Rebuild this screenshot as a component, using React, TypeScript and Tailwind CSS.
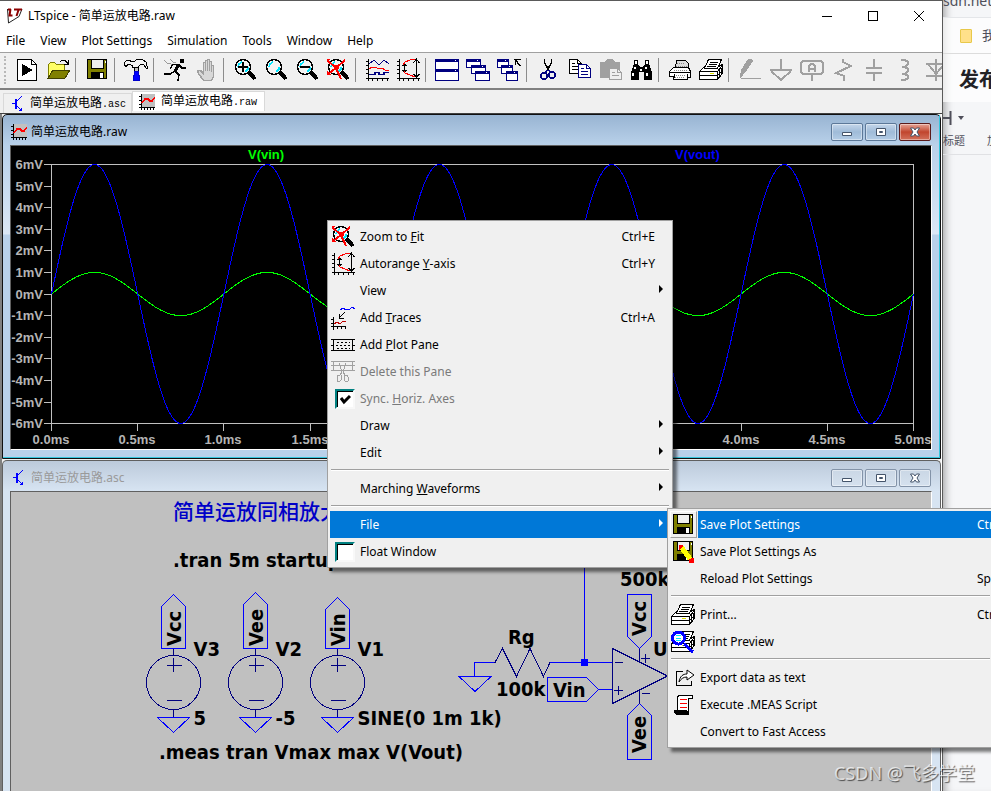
import React from "react";

type Glyph = () => React.ReactElement;

const Box = ({ children }: { children: React.ReactNode }) => (
  <svg viewBox="0 0 24 24" className="h-6 w-6 shrink-0" fill="none" stroke="#000" shapeRendering="crispEdges" aria-hidden="true">
    {children}
  </svg>
);

/* ---------- toolbar and menu glyphs ---------- */

const PlayIcon: Glyph = () => (
  <Box>
    <path d="M2.5 1.5h14l5 5v16h-19z" fill="#fff" />
    <path d="M16.5 1.5v5h5" />
    <path d="M7 6l11 6l-11 6z" fill="#000" stroke="none" />
  </Box>
);

const OpenIcon: Glyph = () => (
  <Box>
    <path d="M2.5 19.5v-13l2-2h4l2 2h8v5" fill="#ffff66" stroke="#808000" />
    <path d="M2 20l5-8h17l-5 8z" fill="#808000" stroke="#404000" />
    <path d="M14 4l2-2h3l3 4M22.5 2v4.500h-5" />
  </Box>
);

const SaveShape = () => (
  <>
    <path d="M2.500 1.500h19v19h-19z" fill="#808000" />
    <path d="M6.500 1.500h12v9h-12z" fill="#efefef" />
    <path d="M6 14h13v7h-13z" fill="#000" stroke="none" />
    <path d="M15 15h3v5h-3zM19.500 3h1v2h-1z" fill="#fff" stroke="none" />
  </>
);
const SaveIcon: Glyph = () => (
  <Box>
    <SaveShape />
  </Box>
);
const SaveAsIcon: Glyph = () => (
  <Box>
    <SaveShape />
    <path d="M10 7l9 12" stroke="#ff0" strokeWidth="5" />
    <path d="M8 5h4l-3 4h-1z" fill="#f00" stroke="#f00" />
    <path d="M18 20l4-2l1 4l-4 1z" fill="#f00" stroke="#f00" />
  </Box>
);

const HammerIcon: Glyph = () => (
  <Box>
    <path d="M.5 7.500v-3l2-2h3l2 1h3l2-2h6l4 3l1 6h-1l-3-4h-3l-2 2v1h-6v-2l-3-1h-2l-1 2z" fill="#f4f4f4" />
    <path d="M10.500 9.500h4v4h-4z" fill="#c0c0c0" />
    <path d="M10.500 13.500h4v3l1 2v4h-6v-4l1-2z" fill="#00f" stroke="#00c" />
  </Box>
);

const RunIcon: Glyph = () => (
  <Box>
    <path d="M17 1h4v4h-4z" fill="#000" stroke="none" />
    <path d="M16 6l-4 7" strokeWidth="3" />
    <path d="M15 6.500h-5l-3 4M16 7l3 3h4M12 13l-5 3h-6M12 13l4 4l-1 6" strokeWidth="1.500" />
    <path d="M1 2l3 3h3l2 2M7 1l3 3h3" stroke="#999" />
  </Box>
);

const HandIcon: Glyph = () => (
  <Box>
    <path
      d="M9.500 22.500l-5-7l-1-3h3l3 3v-11h2v8v-10h2v10v-11h2v11v-9h2v10v-6h2v11l-2 4z"
      stroke="#a0a0a0"
      strokeWidth="1.500"
      fill="#d8d8d8"
    />
  </Box>
);

const LensShape = () => (
  <>
    <path d="M16 14l6 7" strokeWidth="4" />
    <circle cx="10" cy="9" r="7.500" fill="#f4f4f4" strokeWidth="1.500" />
    <path d="M5 9l1-3l3-2M12 14l3-3v-2" stroke="#00e5ff" strokeWidth="1.500" />
  </>
);
const ZoomInIcon: Glyph = () => (
  <Box>
    <LensShape />
    <path d="M5 9h10M10 4v10" strokeWidth="2" />
  </Box>
);
const ZoomBoxIcon: Glyph = () => (
  <Box>
    <LensShape />
  </Box>
);
const ZoomOutIcon: Glyph = () => (
  <Box>
    <LensShape />
    <path d="M5 9h10" strokeWidth="2" />
  </Box>
);
const ZoomFitIcon: Glyph = () => (
  <Box>
    <LensShape />
    <path d="M1 2l9 8l5 11M19 2l-9 8l-8 6" stroke="#f00" strokeWidth="2" />
    <path d="M1 1h3l-3 3zM1 13v3h3z" fill="#f00" stroke="#f00" />
    <path d="M8 7h5v4h-3z" fill="#f00" stroke="none" />
  </Box>
);

const AxesShape = () => <path d="M3.500 1v22M1 20.500h23M1 3.500h2M1 7.500h2M1 11.500h2M1 15.500h2M7.500 21v2M12.500 21v2M17.500 21v2M22.500 21v2" />;

const TracesIcon: Glyph = () => (
  <Box>
    <AxesShape />
    <path d="M4 6l5-4l5 5l5-5l5 4" stroke="#000080" />
    <path d="M4 11l3-2h3l4 2l3-1l3 2h4" stroke="#f00" />
    <path d="M4 16.500h6v-2h4v2h5v-2h5" stroke="#000080" strokeWidth="1.500" />
  </Box>
);
const AutorangeIcon: Glyph = () => (
  <Box>
    <AxesShape />
    <path d="M8.500 6v8M6.500 8l2-2l2 2M6.500 12l2 2l2-2M20.500 2v17M17.500 5l3-4l3 4M17.500 16l3 3l3-3" />
    <path d="M9 4l5-2l5-1M9 15l5 2l5 2M9 4l-2 3M9 15l-1-2" stroke="#f00" />
  </Box>
);

const Pane = ({ x, y, w, h }: { x: number; y: number; w: number; h: number }) => (
  <>
    <path d={`M${x + 0.5} ${y + 0.5}h${w}v${h}h-${w}z`} fill="#fff" stroke="#000080" />
    <path d={`M${x} ${y + 1.5}h${w}`} stroke="#000080" strokeWidth="3" />
    <path d={`M${x + w - 3} ${y + 1.5}h1`} stroke="#fff" />
  </>
);
const TileIcon: Glyph = () => (
  <Box>
    <Pane x={0} y={1} w={23} h={10} />
    <Pane x={0} y={11} w={23} h={11} />
  </Box>
);
const CascadeIcon: Glyph = () => (
  <Box>
    <Pane x={0} y={1} w={14} h={8} />
    <Pane x={5} y={7} w={14} h={8} />
    <Pane x={9} y={13} w={14} h={9} />
  </Box>
);
const CloseAllIcon: Glyph = () => (
  <Box>
    <Pane x={0} y={1} w={11} h={8} />
    <Pane x={4} y={7} w={11} h={8} />
    <Pane x={9} y={13} w={11} h={9} />
    <path d="M18.500 1.500h5M18.500 1.500v5M18 1l5 7" strokeWidth="1.500" />
  </Box>
);

const CutIcon: Glyph = () => (
  <Box>
    <path d="M8.500 1v4l5 8M15.500 1v4l-5 8" strokeWidth="1.500" />
    <circle cx="8" cy="18" r="3" stroke="#000080" strokeWidth="1.500" />
    <circle cx="16" cy="17" r="3" stroke="#000080" strokeWidth="1.500" />
    <path d="M11 12l-2 4M13 12l2 3" stroke="#000080" strokeWidth="1.500" />
  </Box>
);
const CopyIcon: Glyph = () => (
  <Box>
    <path d="M2.500 1.500h8l4 4v10h-12z" fill="#fff" />
    <path d="M10.500 1.500v4h4M5 5.500h3M5 8.500h6M5 11.500h6" />
    <path d="M11.500 6.500h8l4 4v9h-12z" fill="#fff" stroke="#000080" />
    <path d="M19.500 6.500v4h4M14 10.500h3M14 13.500h7M14 16.500h7" stroke="#000080" />
  </Box>
);
const PasteIcon: Glyph = () => (
  <Box>
    <path d="M2 4h5l2-3h6l2 3h5v16h-20z" fill="#a0a0a0" stroke="none" />
    <path d="M11.500 10.500h8l4 4v7h-12z" fill="#efefef" stroke="#a0a0a0" />
    <path d="M14 14.500h3M14 17.500h7M19.500 10.500v4h4" stroke="#a0a0a0" />
  </Box>
);
const FindIcon: Glyph = () => (
  <Box>
    <path d="M5 2h4v4l2 3h3l2-3v-4h4v4l3 8v8h-8v-8h-5v8h-8v-8l3-8z" fill="#000" stroke="none" />
    <path d="M6 3h2v3h-2zM17 3h2v3h-2zM5 9h2v2h-2zM16 9h2v2h-2zM3 15h2v3h-2zM17 15h2v3h-2zM11 11h2v2h-2z" fill="#fff" stroke="none" />
  </Box>
);
const OldPrinterIcon: Glyph = () => (
  <Box>
    <path d="M7.500 9.500l1-7h9l3 3v5" fill="#ddd" />
    <path d="M1.500 13.500l4-4h15l2 4v6h-3v2h-14l1-3h-5z" fill="#fff" />
    <path d="M2 14h20M7 16.500l-2 5M19.500 16v4" />
    <path d="M6 12h14M8 17h10M9 5h8M8 8h11M7 19.500h10" strokeDasharray="1 1" stroke="#888" />
  </Box>
);
const PrinterShape = () => (
  <>
    <path d="M.5 13.500l5-5h14l4-2v9l-5 6h-18z" fill="#fff" />
    <path d="M5.500 10.500l4-9h13l-4 9z" fill="#fff" />
    <path d="M11 4.500h8M10 6.500h8M8 8.500h9M.5 13.500h18l5-6M18.500 13.500v8M.5 17.500h18l5-5M20.500 12v8M22 10v7" />
    <path d="M11 15.500h4" stroke="#e0e000" strokeWidth="1.500" />
  </>
);
const PrinterIcon: Glyph = () => (
  <Box>
    <PrinterShape />
  </Box>
);
const PreviewIcon: Glyph = () => (
  <Box>
    <PrinterShape />
    <circle cx="7.500" cy="8" r="6" fill="#fff" stroke="#00f" strokeWidth="3" />
    <path d="M13 14l9 8" stroke="#00f" strokeWidth="3" />
    <path d="M5 5.500h5M5 8h5M5 10.500h5" stroke="#00e5ff" />
  </Box>
);
const PencilIcon: Glyph = () => (
  <Box>
    <path d="M10 1h4l1 2l-8 12l-5 4l1-7z" fill="#a0a0a0" stroke="none" />
    <path d="M3 20.500h20M2 20l3-3" stroke="#a0a0a0" />
  </Box>
);
const GroundIcon: Glyph = () => (
  <Box>
    <path d="M12 1v11M1 12h22M2 13l10 9l10-9" stroke="#a0a0a0" strokeWidth="2" />
  </Box>
);
const LabelIcon: Glyph = () => (
  <Box>
    <path d="M3 3h18l2 2v9l-2 2h-18l-2-2v-9z" stroke="#a0a0a0" strokeWidth="2" />
    <path d="M12 17v6" stroke="#a0a0a0" strokeWidth="2" />
    <path d="M9 14v-6l2-2h2l2 2v6M9 10.500h6" stroke="#a0a0a0" strokeWidth="2" />
  </Box>
);
const ResistorIcon: Glyph = () => (
  <Box>
    <path d="M12 1v3l8 4l-15 7l8 3v5" stroke="#a0a0a0" strokeWidth="2" />
  </Box>
);
const CapacitorIcon: Glyph = () => (
  <Box>
    <path d="M12 1v9M4 10h16M4 15h16M12 15v8" stroke="#a0a0a0" strokeWidth="2" />
  </Box>
);
const InductorIcon: Glyph = () => (
  <Box>
    <path d="M8 2h4l3 2v2l-3 3h-3M9 9h3l3 2v2l-3 3h-3M9 16h3l3 2v2l-3 2h-4" stroke="#a0a0a0" strokeWidth="2" />
  </Box>
);
const DiodeIcon: Glyph = () => (
  <Box>
    <path d="M12 1v22M2 6h20M4 6l8 10l8-10M2 18h22" stroke="#a0a0a0" strokeWidth="2" />
  </Box>
);
const AddTraceIcon: Glyph = () => (
  <Box>
    <path d="M2.500 11v13M0 20.500h15M0 13.500h2M0 17.500h2M6.500 21v2M10.500 21v2M14.500 21v2M8 12l6-6M8.500 8v4h4" />
    <path d="M3 18l3-2l3 2l3-3l3 1" stroke="#c00000" />
    <path d="M9 4l3-2l3 2l4-1l2-2l3 2" stroke="#00f" />
  </Box>
);
const AddPaneIcon: Glyph = () => (
  <Box>
    <path d="M0 6.500h24M0 17.500h24M2.500 6v12M21.500 6v12M0 12.500h2M22 12.500h2" />
    <path d="M6 9.500h13M5 12.500h15M6 15.500h13" strokeDasharray="2 2" />
  </Box>
);
const DeletePaneIcon: Glyph = () => (
  <Box>
    <path d="M0 1.500h24M0 10.500h24M2.500 1v10M21.500 1v10M0 5.500h24M8 3l3 9M15 3l-3 9" stroke="#a0a0a0" />
    <path d="M11 12l-2 3h-2l-1 2v4l2 1l2-2v-5M12 12l2 3h2l1 2v4l-2 1l-2-2v-5" stroke="#a0a0a0" />
  </Box>
);
const ExportIcon: Glyph = () => (
  <Box>
    <path d="M12 5.500h-6.500v14h15v-5" />
    <path d="M8 16c1-6 4-8 8-8v-4l7 5l-7 5v-3c-4 0-6 2-8 5z" fill="#fff" shapeRendering="auto" />
  </Box>
);
const ScriptIcon: Glyph = () => (
  <Box>
    <path d="M6.500 17v-13l2-2h13v3h-4v13l-2 2" fill="#fff" />
    <path d="M9 6.500h7M9 10.500h7M9 14.500h7" stroke="#f00" />
    <path d="M3 17h12l2 2v2h-12l-2-2z" fill="#000" />
  </Box>
);
const Blank: Glyph = () => <span className="h-6 w-6 shrink-0" />;

const WaveTabIcon = () => (
  <svg viewBox="0 0 16 16" className="h-4 w-4 shrink-0" fill="none" shapeRendering="crispEdges" aria-hidden="true">
    <path d="M2 0h14v13h-14z" fill="#c0c0c0" />
    <path d="M2.500 0v16M0 13.500h16M0 2.500h2M0 6.500h2M0 10.500h2M5.500 14v2M8.500 14v2M11.500 14v2M14.500 14v2" stroke="#000" />
    <path d="M3 9l3-4h3l2 2h2l3-4" stroke="#f00" strokeWidth="1.500" />
  </svg>
);
const TransistorIcon = () => (
  <svg viewBox="0 0 16 16" className="h-4 w-4 shrink-0" fill="none" stroke="#00f" shapeRendering="crispEdges" aria-hidden="true">
    <path d="M2 7.500h3M12 0l-6 6M6 9l6 6M11.500 15v-3M9 14.500h3" />
    <path d="M6 3v10" strokeWidth="2" />
  </svg>
);

const toolGroups: { name: string; icon: Glyph }[][] = [
  [{ name: "New schematic", icon: PlayIcon }, { name: "Open", icon: OpenIcon }],
  [{ name: "Save", icon: SaveIcon }],
  [{ name: "Control panel", icon: HammerIcon }],
  [{ name: "Run", icon: RunIcon }, { name: "Halt", icon: HandIcon }],
  [
    { name: "Zoom in", icon: ZoomInIcon },
    { name: "Zoom area", icon: ZoomBoxIcon },
    { name: "Zoom out", icon: ZoomOutIcon },
    { name: "Zoom to fit", icon: ZoomFitIcon },
  ],
  [{ name: "Pick traces", icon: TracesIcon }, { name: "Autorange", icon: AutorangeIcon }],
  [
    { name: "Tile windows", icon: TileIcon },
    { name: "Cascade windows", icon: CascadeIcon },
    { name: "Close all windows", icon: CloseAllIcon },
  ],
  [
    { name: "Cut", icon: CutIcon },
    { name: "Copy", icon: CopyIcon },
    { name: "Paste", icon: PasteIcon },
    { name: "Find", icon: FindIcon },
  ],
  [{ name: "Print setup", icon: OldPrinterIcon }, { name: "Print", icon: PrinterIcon }],
  [
    { name: "Wire", icon: PencilIcon },
    { name: "Ground", icon: GroundIcon },
    { name: "Label net", icon: LabelIcon },
    { name: "Resistor", icon: ResistorIcon },
    { name: "Capacitor", icon: CapacitorIcon },
    { name: "Inductor", icon: InductorIcon },
    { name: "Diode", icon: DiodeIcon },
  ],
];

function TitleBar() {
  return (
    <div className="flex h-[30px] items-center bg-white">
      <svg viewBox="0 0 16 16" className="ml-[7px] h-4 w-4 shrink-0" fill="none" aria-hidden="true">
        <path d="M.5 1l1 14L12 8.500L15 1" stroke="#222" />
        <path d="M1 1.500h3M3.500 1l-1 6.500h3M7 1.500h8M11.500 2l-2 6" stroke="#8b0000" strokeWidth="2" />
      </svg>
      <h1 className="ml-[5px] flex-1 text-xs">LTspice - 简单运放电路.raw</h1>
      <button aria-label="Minimize" className="flex h-full w-[46px] items-center justify-center">
        <svg viewBox="0 0 10 10" className="h-[10px] w-[10px]" stroke="#000" shapeRendering="crispEdges"><path d="M0 5.500h10" /></svg>
      </button>
      <button aria-label="Maximize" className="flex h-full w-[46px] items-center justify-center">
        <svg viewBox="0 0 10 10" className="h-[10px] w-[10px]" stroke="#000" fill="none" shapeRendering="crispEdges"><path d="M.5.5h9v9h-9z" /></svg>
      </button>
      <button aria-label="Close" className="flex h-full w-[46px] items-center justify-center">
        <svg viewBox="0 0 10 10" className="h-[10px] w-[10px]" stroke="#000"><path d="M0 0l10 10M10 0l-10 10" /></svg>
      </button>
    </div>
  );
}

function MenuBar() {
  return (
    <nav className="flex h-[21px] items-center gap-[15px] bg-white pb-px pl-[6px] text-xs">
      {["File", "View", "Plot Settings", "Simulation", "Tools", "Window", "Help"].map((m) => (
        <button key={m} className="whitespace-nowrap">{m}</button>
      ))}
    </nav>
  );
}

function Toolbar() {
  return (
    <div role="toolbar" className="flex h-[38px] items-center overflow-hidden border-t border-b-2 border-t-[#a0a0a0] border-b-[#808080] bg-[#f0f0f0] pb-[2px]">
      <span className="mr-[5px] ml-1 h-7 w-[2px] shrink-0 border-l-2 border-dotted border-[#b8b8b8]" />
      {toolGroups.map((group, i) => (
        <React.Fragment key={i}>
          {i > 0 && <span className="mr-[5px] ml-[2px] h-6 w-px shrink-0 bg-[#8c8c8c]" />}
          {group.map(({ name, icon: Icon }) => (
            <button key={name} aria-label={name} className="flex w-[31px] shrink-0 justify-center">
              <Icon />
            </button>
          ))}
        </React.Fragment>
      ))}
    </div>
  );
}

function DocTabs() {
  return (
    <div role="tablist" className="flex h-6 border-b border-[#404040] bg-[#f0f0f0] pl-[3px] text-xs">
      <button role="tab" aria-selected="false" className="mt-[3px] flex h-5 w-[129px] items-center gap-1 border border-b-0 border-[#d9d9d9] pl-[6px]">
        <TransistorIcon />
        <span className="whitespace-nowrap">简单运放电路<span className="font-['Liberation_Mono',monospace] text-[10px]">.asc</span></span>
      </button>
      <button role="tab" aria-selected="true" className="mt-px flex h-5 w-[133px] items-center gap-[6px] border border-b-0 border-[#d9d9d9] bg-white pl-[6px]">
        <WaveTabIcon />
        <span className="whitespace-nowrap">简单运放电路<span className="font-['Liberation_Mono',monospace] text-[10px]">.raw</span></span>
      </button>
    </div>
  );
}

function ChildButtons({ active }: { active: boolean }) {
  const plain = active
    ? "border-[#5c7898] bg-linear-to-b from-[#c4d6ea] via-[#9fbbd8] to-[#b4cde6]"
    : "border-[#8393a8] bg-linear-to-b from-[#cad7e5] to-[#d5e1ee]";
  const close = active
    ? "border-[#5a1a1a] bg-linear-to-b from-[#e5a396] via-[#c1452d] to-[#d2705a]"
    : plain;
  const base = "flex h-[18px] w-8 items-center justify-center rounded-[2px] border ring-1 ring-inset ring-white/40";
  return (
    <div className="flex gap-[2px]">
      <button aria-label="Minimize" className={`${base} ${plain}`}>
        <svg viewBox="0 0 12 10" className="h-[10px] w-3" fill="#fff" stroke="#44546a"><path d="M1.500 5.500h9v3h-9z" /></svg>
      </button>
      <button aria-label="Maximize" className={`${base} ${plain}`}>
        <svg viewBox="0 0 12 10" className="h-[10px] w-3" fill="#fff" stroke="#44546a"><path d="M1.500 1.500h9v7h-9z" /><path d="M4.500 4.500h3v1h-3z" /></svg>
      </button>
      <button aria-label="Close" className={`${base} ${close}`}>
        <svg viewBox="0 0 12 10" className="h-[10px] w-3" fill="#fff" stroke="#44546a"><path d="M1.500 1h3l1.500 2l1.500-2h3l-2.500 4l2.500 4h-3l-1.500-2l-1.500 2h-3l2.500-4z" /></svg>
      </button>
    </div>
  );
}

/* ---------- waveform plot ---------- */

const plotFont = "font-['Liberation_Sans',Arial,sans-serif] text-[13px] font-bold";
const sine = (amp: number) => {
  let d = "";
  for (let x = 0; x <= 862; x += 2) {
    d += `${x ? "L" : "M"}${51.5 + x} ${(294 - amp * Math.sin((x / 862) * 10 * Math.PI)).toFixed(1)}`;
  }
  return d;
};

function Waveforms() {
  const volts = [6, 5, 4, 3, 2, 1, 0, -1, -2, -3, -4, -5, -6];
  return (
    <svg viewBox="11 146 920 303" className={`block w-full bg-black ${plotFont}`} fill="none" role="img" aria-label="Waveform plot">
      <g stroke="#c0c0c0" shapeRendering="crispEdges">
        <path d="M51.500 164.500h862v259h-862z" />
        {volts.map((v, i) => (
          <path key={v} d={`M44 ${Math.round(164 + i * 21.6) + 0.5}h7`} />
        ))}
        {volts.slice(0, 11).map((v, i) => (
          <path key={v} d={`M${Math.round(51 + i * 86.2) + 0.5} 424v7`} />
        ))}
      </g>
      <g fill="#b4b4b4">
        {volts.map((v, i) => (
          <text key={v} x="43" y={Math.round(169 + i * 21.6)} textAnchor="end">{v}mV</text>
        ))}
        {volts.slice(0, 11).map((v, i) => (
          <text key={v} x={Math.round(51 + i * 86.2)} y="444" textAnchor="middle">{(i / 2).toFixed(1)}ms</text>
        ))}
      </g>
      <text x="248" y="159" fill="#00ff00">V(vin)</text>
      <text x="675" y="159" fill="#0000ff">V(vout)</text>
      <g shapeRendering="crispEdges">
        <path d={sine(21.6)} stroke="#00ff00" />
        <path d={sine(129.5)} stroke="#0000ff" />
      </g>
    </svg>
  );
}

/* ---------- schematic ---------- */

const Source = ({ x, tip, net, name, value }: { x: number; tip: number; net: string; name: string; value: string }) => (
  <g>
    <path d={`M${x} ${tip}l12 12V648.500h-24V${tip + 12}z`} stroke="#0000ff" />
    <path d={`M${x - 16} 717.500h32l-16 15z`} stroke="#0000ff" />
    <g stroke="#000080">
      <circle cx={x} cy="682.500" r="27" />
      <path d={`M${x} 649v6M${x} 709v8M${x - 7} 665.500h15M${x} 658v14M${x - 7} 700.500h15`} />
    </g>
    <g fill="#000" stroke="none">
      <text transform={`translate(${x + 7} 646) rotate(-90)`}>{net}</text>
      <text x={x + 20} y="656">{name}</text>
      <text x={x + 20} y="725">{value}</text>
    </g>
  </g>
);

function Schematic() {
  return (
    <svg
      viewBox="11 492 920 299"
      preserveAspectRatio="xMinYMin meet"
      className="block w-full bg-[#c0c0c0] font-['DejaVu_Sans_Condensed','Noto_Sans',sans-serif] text-[20px] font-bold"
      fill="none"
      shapeRendering="crispEdges"
      role="img"
      aria-label="Circuit schematic"
    >
      <text x="173" y="519" fill="#0000c8" className="font-['Noto_Sans_CJK_SC',sans-serif] text-[21px] font-medium">简单运放同相放大</text>
      <text x="173" y="567" fill="#000">.tran 5m startup</text>
      <Source x={173.5} tip={594.5} net="Vcc" name="V3" value="5" />
      <Source x={255.5} tip={592.5} net="Vee" name="V2" value="-5" />
      <Source x={337.5} tip={597.5} net="Vin" name="V1" value="SINE(0 1m 1k)" />
      <g stroke="#0000ff">
        <path d="M474.500 676v-13.500h20M550 662.500h62M584.500 560v102M598 689.500h14M459 676.500h32l-16 15z" />
        <path d="M547.500 677.500h39l12 12l-12 12h-39zM627.500 594.500h24v42l-12 12l-12-12zM627.500 759.500h24v-44l-12-12l-12 12z" />
        <path d="M581 659h7v7h-7z" fill="#0000ff" stroke="none" />
      </g>
      <g stroke="#000080">
        <path d="M494 662.500h1l7.500-14l14 28l13.500-28l13.500 28l6.500-14M612.500 648.500v55l55-27.500zM639.500 649v13M639.500 690v14" />
        <path d="M615 662.500h8M614 690.500h9M618.500 686v9M641 658.500h9M645.500 654v9M642 693.500h8" />
      </g>
      <g fill="#000">
        <text x="159" y="759">.meas tran Vmax max V(Vout)</text>
        <text x="508" y="644">Rg</text>
        <text x="496" y="696">100k</text>
        <text x="553" y="697">Vin</text>
        <text x="620" y="586">500k</text>
        <text x="653" y="656">U1</text>
        <text transform="translate(646 636) rotate(-90)">Vcc</text>
        <text transform="translate(646 753) rotate(-90)">Vee</text>
      </g>
    </svg>
  );
}

/* ---------- popup menus ---------- */

type Item =
  | "-"
  | { label: React.ReactNode; icon?: Glyph; keys?: string; sub?: boolean; off?: boolean; check?: boolean; hot?: boolean };

const plotMenu: Item[] = [
  { label: <>Zoom to <u>F</u>it</>, icon: ZoomFitIcon, keys: "Ctrl+E" },
  { label: <>Autorange <u>Y</u>-axis</>, icon: AutorangeIcon, keys: "Ctrl+Y" },
  { label: "View", sub: true },
  { label: <>Add <u>T</u>races</>, icon: AddTraceIcon, keys: "Ctrl+A" },
  { label: <>Add <u>P</u>lot Pane</>, icon: AddPaneIcon },
  { label: "Delete this Pane", icon: DeletePaneIcon, off: true },
  { label: <>Sync. <u>H</u>oriz. Axes</>, off: true, check: true },
  { label: "Draw", sub: true },
  { label: "Edit", sub: true },
  "-",
  { label: <>Marching <u>W</u>aveforms</>, sub: true },
  "-",
  { label: "File", sub: true, hot: true },
  { label: "Float Window", check: false },
];

const fileMenu: Item[] = [
  { label: "Save Plot Settings", icon: SaveIcon, keys: "Ctr", hot: true },
  { label: "Save Plot Settings As", icon: SaveAsIcon },
  { label: "Reload Plot Settings", keys: "Sp" },
  "-",
  { label: "Print...", icon: PrinterIcon, keys: "Ctr" },
  { label: "Print Preview", icon: PreviewIcon },
  "-",
  { label: "Export data as text", icon: ExportIcon },
  { label: "Execute .MEAS Script", icon: ScriptIcon },
  { label: "Convert to Fast Access" },
];

function MenuRow({ item }: { item: Exclude<Item, "-"> }) {
  const tone = item.off ? "text-[#7a7a7a]" : item.hot ? "text-white" : "text-black";
  const row = `flex h-[27px] w-full items-center text-left ${tone}`;
  if (item.check !== undefined) {
    return (
      <label className={row}>
        <span className="flex w-[30px] pl-[5px]">
          <input
            type="checkbox"
            defaultChecked={item.check}
            disabled={item.off}
            className="peer h-5 w-5 appearance-none border-t-2 border-r-2 border-b-2 border-l-2 border-t-[#008080] border-r-[#f8f8f8] border-b-[#f8f8f8] border-l-[#008080] bg-white shadow-[inset_1px_1px_0_#000]"
          />
          <svg viewBox="0 0 12 12" className="pointer-events-none invisible mt-1 -ml-4 h-3 w-3 peer-checked:visible" stroke="#000" strokeWidth="3" fill="none" aria-hidden="true">
            <path d="M2 5l3 4l6-6" />
          </svg>
        </span>
        <span>{item.label}</span>
      </label>
    );
  }
  const Icon = item.icon ?? Blank;
  const raised = item.hot && item.icon;
  return (
    <button disabled={item.off} className={`${row} ${item.hot && !raised ? "bg-[#0078d7]" : ""}`}>
      <span
        className={
          raised
            ? "flex h-full w-[27px] items-center border border-t-white border-r-[#a0a0a0] border-b-[#a0a0a0] border-l-white"
            : "flex w-[27px] items-center pl-px"
        }
      >
        <Icon />
      </span>
      <span className={`flex h-full flex-1 items-center ${raised ? "ml-px bg-[#0078d7] pl-[2px]" : "pl-[3px]"}`}>
        <span className="flex-1">{item.label}</span>
        {item.keys && <span className={item.keys.includes("+") ? "pr-[15px]" : "w-[14px]"}>{item.keys}</span>}
        {item.sub && (
          <svg viewBox="0 0 4 8" className="mr-[7px] mb-1 h-2 w-1" fill="currentColor" aria-hidden="true"><path d="M0 0l4 4l-4 4z" /></svg>
        )}
      </span>
    </button>
  );
}

function Popup({ items }: { items: Item[] }) {
  return (
    <>
      {items.map((item, i) =>
        item === "-" ? (
          <hr key={i} className="mx-px mt-[3px] mb-1 h-[2px] border-t border-b border-t-[#a0a0a0] border-b-white" />
        ) : (
          <MenuRow key={i} item={item} />
        ),
      )}
    </>
  );
}

/* ---------- page behind the application ---------- */

function BrowserEdge() {
  return (
    <aside className="flex w-12 shrink-0 flex-col overflow-hidden bg-[#f5f6f8] whitespace-nowrap text-[#4f4f5a] shadow-[inset_8px_0_8px_-6px_rgba(0,0,0,0.35)]">
      <div className="flex h-[18px] items-center border-b border-[#e4e6e9]">
        <span className="-mt-4 text-sm">sdn.net/</span>
      </div>
      <div className="flex h-9 items-center gap-[10px] border-b border-[#dcdcdc] bg-white/70 pl-[17px]">
        <span className="h-[14px] w-3 shrink-0 rounded-[1px] border border-[#e8c84a] bg-[#ffe08a]" />
        <span className="text-[13px]">我</span>
      </div>
      <div className="flex h-12 items-center bg-white/70 pt-1 pl-4 text-xl font-bold text-[#222226]">发布</div>
      <div className="flex h-[53px] flex-col justify-center gap-1 border-b border-[#e0e1e4] pt-2">
        <span className="flex items-center gap-[6px]">
          <svg viewBox="0 0 9 14" className="h-[14px] w-[9px]" stroke="currentColor" strokeWidth="2" aria-hidden="true"><path d="M0 7h7M7.500 0v14" /></svg>
          <svg viewBox="0 0 6 4" className="h-1 w-[6px]" fill="currentColor" aria-hidden="true"><path d="M0 0h6l-3 4z" /></svg>
        </span>
        <span className="flex gap-[22px] text-[11px] leading-6"><span>标题</span><span>加</span></span>
      </div>
    </aside>
  );
}

export default function App() {
  return (
    <div className="relative flex h-screen overflow-hidden bg-[#f5f6f8] font-['Noto_Sans','Noto_Sans_CJK_SC',sans-serif] text-black">
      <main className="flex min-w-0 flex-1 flex-col border-t border-r border-[#5a5a5a] bg-[#f0f0f0]">
        <TitleBar />
        <MenuBar />
        <Toolbar />
        <DocTabs />
        <div className="flex min-h-0 flex-1 flex-col border-r border-l-2 border-r-white border-l-[#808080]">
          <section className="shrink-0 rounded-t-[5px] border border-[#101010] bg-[linear-gradient(to_bottom,#98b4d2_0,#b9d1ea_30px,#dbe7f5_119px,#b9d1ea_120px)]">
            <div className="border-r border-b border-[#35c5dc] pr-[7px] pb-[7px] pl-[7px]">
              <header className="flex h-[30px] items-center gap-1 pt-1 pr-px pl-px">
                <WaveTabIcon />
                <h2 className="flex-1 text-xs">简单运放电路.raw</h2>
                <ChildButtons active />
              </header>
              <div className="border border-t-[#606060] border-r-white border-b-white border-l-[#606060]">
                <Waveforms />
              </div>
            </div>
          </section>
          <section className="mt-px flex min-h-0 flex-1 flex-col rounded-t-[5px] border border-b-0 border-[#606060] bg-[linear-gradient(to_bottom,#bccadb_0,#d7e4f2_30px)]">
            <header className="flex h-[30px] items-center gap-1 pt-1 pr-[9px] pl-2">
              <TransistorIcon />
              <h2 className="flex-1 text-xs text-[#9a9a9a]">简单运放电路.asc</h2>
              <ChildButtons active={false} />
            </header>
            <div className="mr-2 ml-[7px] min-h-0 flex-1 overflow-hidden border border-b-0 border-t-[#606060] border-r-white border-l-[#606060] bg-[#c0c0c0]">
              <Schematic />
            </div>
          </section>
        </div>
      </main>
      <BrowserEdge />

      <div className="absolute top-[220px] left-[327px] w-[346px] border border-[#a0a0a0] bg-[#f0f0f0] p-[2px] text-xs shadow-[4px_4px_3px_rgba(0,0,0,0.5)]">
        <Popup items={plotMenu} />
      </div>
      <div className="absolute top-[508px] right-0 left-[667px] overflow-hidden border border-r-0 border-[#a0a0a0] bg-[#f0f0f0] py-[2px] pl-[2px] text-xs whitespace-nowrap shadow-[4px_4px_3px_rgba(0,0,0,0.5)]">
        <Popup items={fileMenu} />
      </div>
      <p className="absolute right-4 bottom-[6px] text-lg leading-6 text-white/70 [text-shadow:1px_1px_1px_rgba(0,0,0,0.6)]">CSDN @飞多学堂</p>
    </div>
  );
}
